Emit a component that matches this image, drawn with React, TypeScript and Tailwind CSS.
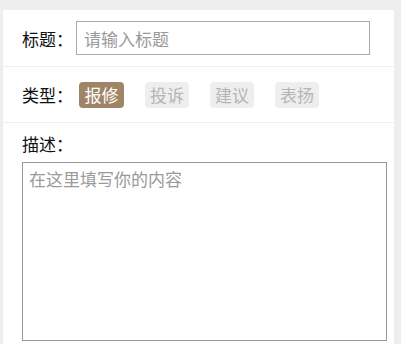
const types = ['报修', '投诉', '建议', '表扬'];

export default function App() {
  const active = 0;
  return (
    <div
      className="w-[401px] h-[344px] overflow-hidden bg-[#eeeeee] pt-[10px] pl-[3px]"
      style={{ fontFamily: '"Noto Sans CJK SC", "Noto Sans", sans-serif' }}
    >
      <div className="w-[391px] h-[400px] bg-white">
        {/* title */}
        <div className="h-[57px] flex items-center pl-[19px] border-b border-[#eeeeee]">
          <span className="text-[17px] text-[#111] w-[54px] leading-none">标题：</span>
          <input
            className="w-[294px] h-[34px] border border-[#aaaaaa] px-[7px] text-[17px] outline-none placeholder:text-[#9a9a9a]"
            placeholder="请输入标题"
          />
        </div>

        {/* type */}
        <div className="h-[56px] flex items-center pl-[19px] border-b border-[#eeeeee]">
          <span className="text-[17px] text-[#111] w-[57px] leading-none">类型：</span>
          <div className="flex gap-[21px]">
            {types.map((t, i) => (
              <span
                key={t}
                className={
                  i === active
                    ? 'w-[45px] h-[26px] rounded-[4px] flex items-center justify-center text-[17px] bg-[#9f8567] text-white'
                    : 'w-[44px] h-[26px] rounded-[4px] flex items-center justify-center text-[17px] bg-[#eeeeee] text-[#b5b5b5]'
                }
              >
                {t}
              </span>
            ))}
          </div>
        </div>

        {/* description */}
        <div className="pl-[19px] pt-[9px]">
          <div className="text-[17px] text-[#111] leading-[23px]">描述：</div>
          <textarea
            className="mt-[7px] w-[365px] h-[179px] border border-[#999999] px-[6px] py-[3px] text-[17px] outline-none resize-none placeholder:text-[#9a9a9a] block"
            placeholder="在这里填写你的内容"
          />
        </div>
      </div>
    </div>
  );
}
